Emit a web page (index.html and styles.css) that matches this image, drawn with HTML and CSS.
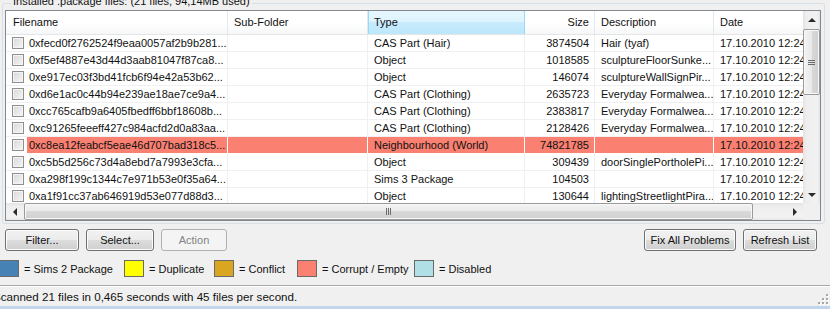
FILE: index.html
```html
<!DOCTYPE html>
<html lang="en">
<head>
  <meta charset="UTF-8">
  <title>Package files</title>
  <link rel="stylesheet" href="styles.css">
</head>
<body>
  <div class="GroupBox">
    <span class="GroupBox_Title">Installed .package files: (21 files, 94,14MB used)</span>

    <div class="ListView">
      <div class="ListView_Body">
        <div class="ListView_Header">
          <span class="ListView_HeadCell -first">Filename</span>
          <span class="ListView_HeadCell">Sub-Folder</span>
          <span class="ListView_HeadCell -hover">Type</span>
          <span class="ListView_HeadCell -num">Size</span>
          <span class="ListView_HeadCell">Description</span>
          <span class="ListView_HeadCell">Date</span>
        </div>

        <div class="ListView_Row">
          <span class="ListView_Cell -first"><i class="CheckBox"></i><span class="ListView_Label">0xfecd0f2762524f9eaa0057af2b9b281...</span></span>
          <span class="ListView_Cell"></span>
          <span class="ListView_Cell">CAS Part (Hair)</span>
          <span class="ListView_Cell -num">3874504</span>
          <span class="ListView_Cell">Hair (tyaf)</span>
          <span class="ListView_Cell">17.10.2010 12:24</span>
        </div>
        <div class="ListView_Row">
          <span class="ListView_Cell -first"><i class="CheckBox"></i><span class="ListView_Label">0xf5ef4887e43d44d3aab81047f87ca8...</span></span>
          <span class="ListView_Cell"></span>
          <span class="ListView_Cell">Object</span>
          <span class="ListView_Cell -num">1018585</span>
          <span class="ListView_Cell">sculptureFloorSunke...</span>
          <span class="ListView_Cell">17.10.2010 12:24</span>
        </div>
        <div class="ListView_Row">
          <span class="ListView_Cell -first"><i class="CheckBox"></i><span class="ListView_Label">0xe917ec03f3bd41fcb6f94e42a53b62...</span></span>
          <span class="ListView_Cell"></span>
          <span class="ListView_Cell">Object</span>
          <span class="ListView_Cell -num">146074</span>
          <span class="ListView_Cell">sculptureWallSignPir...</span>
          <span class="ListView_Cell">17.10.2010 12:24</span>
        </div>
        <div class="ListView_Row">
          <span class="ListView_Cell -first"><i class="CheckBox"></i><span class="ListView_Label">0xd6e1ac0c44b94e239ae18ae7ce9a4...</span></span>
          <span class="ListView_Cell"></span>
          <span class="ListView_Cell">CAS Part (Clothing)</span>
          <span class="ListView_Cell -num">2635723</span>
          <span class="ListView_Cell">Everyday Formalwea...</span>
          <span class="ListView_Cell">17.10.2010 12:24</span>
        </div>
        <div class="ListView_Row">
          <span class="ListView_Cell -first"><i class="CheckBox"></i><span class="ListView_Label">0xcc765cafb9a6405fbedff6bbf18608b...</span></span>
          <span class="ListView_Cell"></span>
          <span class="ListView_Cell">CAS Part (Clothing)</span>
          <span class="ListView_Cell -num">2383817</span>
          <span class="ListView_Cell">Everyday Formalwea...</span>
          <span class="ListView_Cell">17.10.2010 12:24</span>
        </div>
        <div class="ListView_Row">
          <span class="ListView_Cell -first"><i class="CheckBox"></i><span class="ListView_Label">0xc91265feeeff427c984acfd2d0a83aa...</span></span>
          <span class="ListView_Cell"></span>
          <span class="ListView_Cell">CAS Part (Clothing)</span>
          <span class="ListView_Cell -num">2128426</span>
          <span class="ListView_Cell">Everyday Formalwea...</span>
          <span class="ListView_Cell">17.10.2010 12:24</span>
        </div>
        <div class="ListView_Row -corrupt">
          <span class="ListView_Cell -first"><i class="CheckBox"></i><span class="ListView_Label">0xc8ea12feabcf5eae46d707bad318c5...</span></span>
          <span class="ListView_Cell"></span>
          <span class="ListView_Cell">Neighbourhood (World)</span>
          <span class="ListView_Cell -num">74821785</span>
          <span class="ListView_Cell"></span>
          <span class="ListView_Cell">17.10.2010 12:24</span>
        </div>
        <div class="ListView_Row">
          <span class="ListView_Cell -first"><i class="CheckBox"></i><span class="ListView_Label">0xc5b5d256c73d4a8ebd7a7993e3cfa...</span></span>
          <span class="ListView_Cell"></span>
          <span class="ListView_Cell">Object</span>
          <span class="ListView_Cell -num">309439</span>
          <span class="ListView_Cell">doorSinglePortholePi...</span>
          <span class="ListView_Cell">17.10.2010 12:24</span>
        </div>
        <div class="ListView_Row">
          <span class="ListView_Cell -first"><i class="CheckBox"></i><span class="ListView_Label">0xa298f199c1344c7e971b53e0f35a64...</span></span>
          <span class="ListView_Cell"></span>
          <span class="ListView_Cell">Sims 3 Package</span>
          <span class="ListView_Cell -num">104503</span>
          <span class="ListView_Cell"></span>
          <span class="ListView_Cell">17.10.2010 12:24</span>
        </div>
        <div class="ListView_Row">
          <span class="ListView_Cell -first"><i class="CheckBox"></i><span class="ListView_Label">0xa1f91cc37ab646919d53e077d88d3...</span></span>
          <span class="ListView_Cell"></span>
          <span class="ListView_Cell">Object</span>
          <span class="ListView_Cell -num">130644</span>
          <span class="ListView_Cell">lightingStreetlightPira...</span>
          <span class="ListView_Cell">17.10.2010 12:24</span>
        </div>
      </div>

      <!-- スクロールバー -->
      <div class="ScrollBar -vertical">
        <span class="ScrollBar_Arrow -up"></span>
        <span class="ScrollBar_Thumb"><span class="ScrollBar_Grip"></span></span>
        <span class="ScrollBar_Track"></span>
        <span class="ScrollBar_Arrow -down"></span>
      </div>
      <div class="ScrollBar -horizontal">
        <span class="ScrollBar_Arrow -left"></span>
        <span class="ScrollBar_Thumb"><span class="ScrollBar_Grip"></span></span>
        <span class="ScrollBar_Track"></span>
        <span class="ScrollBar_Arrow -right"></span>
      </div>
      <div class="ScrollBar_Corner"></div>
    </div>
  </div>

  <div class="ButtonRow">
    <button class="Button -filter">Filter...</button>
    <button class="Button -select">Select...</button>
    <button class="Button -action" disabled>Action</button>
    <button class="Button -fix">Fix All Problems</button>
    <button class="Button -refresh">Refresh List</button>
  </div>

  <div class="Legend">
    <span class="Legend_Item -sims2"><i class="Legend_Swatch"></i>= Sims 2 Package</span>
    <span class="Legend_Item -duplicate"><i class="Legend_Swatch"></i>= Duplicate</span>
    <span class="Legend_Item -conflict"><i class="Legend_Swatch"></i>= Conflict</span>
    <span class="Legend_Item -corrupt"><i class="Legend_Swatch"></i>= Corrupt / Empty</span>
    <span class="Legend_Item -disabled"><i class="Legend_Swatch"></i>= Disabled</span>
  </div>

  <div class="StatusBar">
    <span class="StatusBar_Text">Scanned 21 files in 0,465 seconds with 45 files per second.</span>
    <svg class="StatusBar_Grip" width="12" height="12" viewBox="0 0 12 12">
      <g fill="#fff">
        <rect x="10" y="2" width="2" height="2"/><rect x="10" y="6" width="2" height="2"/><rect x="6" y="6" width="2" height="2"/>
        <rect x="10" y="10" width="2" height="2"/><rect x="6" y="10" width="2" height="2"/><rect x="2" y="10" width="2" height="2"/>
      </g>
      <g fill="#a7a7a7">
        <rect x="9" y="1" width="2" height="2"/><rect x="9" y="5" width="2" height="2"/><rect x="5" y="5" width="2" height="2"/>
        <rect x="9" y="9" width="2" height="2"/><rect x="5" y="9" width="2" height="2"/><rect x="1" y="9" width="2" height="2"/>
      </g>
    </svg>
  </div>
  <div class="WindowFrame"></div>
</body>
</html>
```

FILE: styles.css
```css
html,
body {
  margin: 0;
}
body {
  width: 830px;
  height: 309px;
  overflow: hidden;
  background-color: #f0f0f0;
  color: #111;
  font-family: "Liberation Sans", Arial, sans-serif;
  font-size: 11px;
}

/*
  グループボックス
*/
.GroupBox {
  position: relative;
  margin: 3px 5px 0 2px;
  padding: 6px 3px 2px 2px;
  border: 1px solid #d5dfe5;
  border-radius: 3px;
}
/* 枠線の上に重ねるタイトル */
.GroupBox_Title {
  position: absolute;
  top: -9px;
  left: 8px;
  padding: 0 2px;
  background-color: #f0f0f0;
  line-height: 13px;
}

/*
  リストビュー
*/
.ListView {
  display: grid;
  grid-template-columns: 1fr 17px;
  grid-template-rows: 1fr 17px;
  box-sizing: border-box;
  height: 211px;
  border: 1px solid #828790;
  background-color: #fff;
}
.ListView_Body {
  overflow: hidden;
}
.ListView_Header,
.ListView_Row {
  display: grid;
  grid-template-columns: 222px 140px 157px 70px 119px 110px;
}
.ListView_Header {
  box-sizing: border-box;
  height: 24px;
  border-bottom: 1px solid #e5e5e5;
  background: linear-gradient(#fff, #fff 55%, #f6f7f8);
}
.ListView_HeadCell {
  box-sizing: border-box;
  padding: 0 6px;
  border-right: 1px solid #e3e8ee;
  line-height: 23px;
  white-space: nowrap;
}
.ListView_HeadCell.-first {
  padding-left: 7px;
}
.ListView_HeadCell.-num {
  text-align: right;
  padding-right: 5px;
}
/* マウスがのっている列見出し */
.ListView_HeadCell.-hover {
  border-right-color: #96d9f9;
  box-shadow: inset 1px 0 0 #96d9f9;
  background: linear-gradient(#e8f7fe, #ddf3fe 50%, #c6ebfd 50%, #bde7fc);
}

.ListView_Row {
  box-sizing: border-box;
  height: 17px;
  border-bottom: 1px solid #f0f0f0;
}
.ListView_Cell {
  box-sizing: border-box;
  padding: 0 6px;
  border-right: 1px solid #f0f0f0;
  line-height: 16px;
  white-space: nowrap;
  overflow: hidden;
}
.ListView_Cell.-num {
  text-align: right;
  padding-right: 5px;
}
.ListView_Cell.-first {
  display: flex;
  align-items: center;
  padding: 0;
}
.ListView_Label {
  flex: 1;
  margin-left: 3px;
  padding-left: 2px;
}
.CheckBox {
  flex: none;
  box-sizing: border-box;
  width: 12px;
  height: 12px;
  margin-left: 6px;
  border: 1px solid #8f8f8f;
  background: linear-gradient(135deg, #d8d8d8, #f6f6f6);
  box-shadow: inset 0 0 0 1px #f4f4f4;
}

/* 破損・空のファイル */
.ListView_Row.-corrupt {
  border-bottom-color: #fff;
}
.ListView_Row.-corrupt .ListView_Cell {
  background-color: #fa8072;
  border-right-color: #fff;
}
.ListView_Row.-corrupt .ListView_Cell.-first {
  background-color: #fff;
}
.ListView_Row.-corrupt .ListView_Label {
  background-color: #fa8072;
}

/*
  スクロールバー
*/
.ScrollBar {
  display: flex;
}
.ScrollBar.-vertical {
  flex-direction: column;
  background: linear-gradient(90deg, #e3e3e3, #eeeeee 20%, #f2f2f2 80%, #e6e6e6);
}
.ScrollBar.-horizontal {
  background: linear-gradient(#e3e3e3, #eeeeee 20%, #f2f2f2 80%, #e6e6e6);
}
.ScrollBar_Arrow {
  flex: none;
  display: grid;
  place-items: center;
  width: 17px;
  height: 17px;
}
.ScrollBar_Arrow::before {
  content: "";
  width: 0;
  height: 0;
  border-style: solid;
}
.ScrollBar_Arrow.-up::before {
  border-width: 0 4px 4px;
  border-color: transparent transparent #2b2b2b;
}
.ScrollBar_Arrow.-down::before {
  border-width: 4px 4px 0;
  border-color: #2b2b2b transparent transparent;
}
.ScrollBar_Arrow.-left::before {
  border-width: 4px 4px 4px 0;
  border-color: transparent #2b2b2b transparent transparent;
}
.ScrollBar_Arrow.-right::before {
  border-width: 4px 0 4px 4px;
  border-color: transparent transparent transparent #2b2b2b;
}
.ScrollBar_Track {
  flex: 1;
}
.ScrollBar_Thumb {
  flex: none;
  display: grid;
  place-items: center;
  box-sizing: border-box;
  border: 1px solid #9a9a9a;
  border-radius: 2px;
}
.ScrollBar.-vertical .ScrollBar_Thumb {
  height: 66px;
  margin: 1px 0 0;
  background: linear-gradient(90deg, #f3f3f3, #e9e9e9 50%, #d9d9d9 50%, #d0d0d0);
  box-shadow: inset 0 0 0 1px #f8f8f8;
}
.ScrollBar.-horizontal .ScrollBar_Thumb {
  width: 729px;
  margin: 0 0 0 1px;
  background: linear-gradient(#f3f3f3, #e9e9e9 50%, #d9d9d9 50%, #d0d0d0);
  box-shadow: inset 0 0 0 1px #f8f8f8;
}
.ScrollBar.-vertical .ScrollBar_Grip {
  width: 7px;
  height: 5px;
  background: repeating-linear-gradient(#6b6b6b 0 1px, transparent 1px 2px);
}
.ScrollBar.-horizontal .ScrollBar_Grip {
  width: 5px;
  height: 7px;
  background: repeating-linear-gradient(90deg, #6b6b6b 0 1px, transparent 1px 2px);
}
.ScrollBar_Corner {
  background-color: #f0f0f0;
}

/*
  ボタン
*/
.ButtonRow {
  display: flex;
  gap: 7px;
  margin: 5px 13px 0 5px;
}
.Button {
  box-sizing: border-box;
  height: 22px;
  padding: 0;
  border: 1px solid #707070;
  border-radius: 3px;
  background: linear-gradient(#f2f2f2, #ebebeb 50%, #dddddd 50%, #cfcfcf);
  box-shadow: inset 0 0 0 1px #fbfbfb;
  color: #111;
  font-family: inherit;
  font-size: 11px;
}
.Button.-filter { width: 74px; }
.Button.-select { width: 68px; }
.Button.-action { width: 66px; }
.Button.-fix {
  width: 92px;
  margin-left: auto;
}
.Button.-refresh { width: 74px; }
.Button:disabled {
  border-color: #adb2b5;
  background: #f4f4f4;
  box-shadow: none;
  color: #838383;
}

/*
  色の凡例
*/
.Legend {
  display: flex;
  align-items: center;
  height: 17px;
  margin-top: 9px;
}
.Legend_Item {
  display: flex;
  flex: none;
  align-items: center;
  gap: 5px;
  white-space: nowrap;
}
.Legend_Swatch {
  box-sizing: border-box;
  width: 20px;
  height: 17px;
  border: 1px solid #6a6a6a;
}
.Legend_Item.-sims2 { width: 125px; margin-left: -1px; }
.Legend_Item.-duplicate { width: 90px; }
.Legend_Item.-conflict { width: 83px; }
.Legend_Item.-corrupt { width: 117px; }
.Legend_Item.-sims2 .Legend_Swatch { background-color: #4682b4; }
.Legend_Item.-duplicate .Legend_Swatch { background-color: #ffff00; }
.Legend_Item.-conflict .Legend_Swatch { background-color: #daa520; }
.Legend_Item.-corrupt .Legend_Swatch { background-color: #fa8072; }
.Legend_Item.-disabled .Legend_Swatch { background-color: #b0e0e6; }

/*
  ステータスバー
*/
.StatusBar {
  display: flex;
  justify-content: space-between;
  align-items: flex-end;
  box-sizing: border-box;
  height: 21px;
  margin-top: 8px;
  border-top: 1px solid #a8a8a8;
  box-shadow: inset 0 1px 0 #fff;
}
.StatusBar_Text {
  align-self: center;
  margin-left: -7px;
  font-size: 11.6px;
  white-space: nowrap;
}
.StatusBar_Grip {
  margin: 0 1px 1px 0;
}
.WindowFrame {
  height: 3px;
  background-color: #c3d5ea;
}
```
